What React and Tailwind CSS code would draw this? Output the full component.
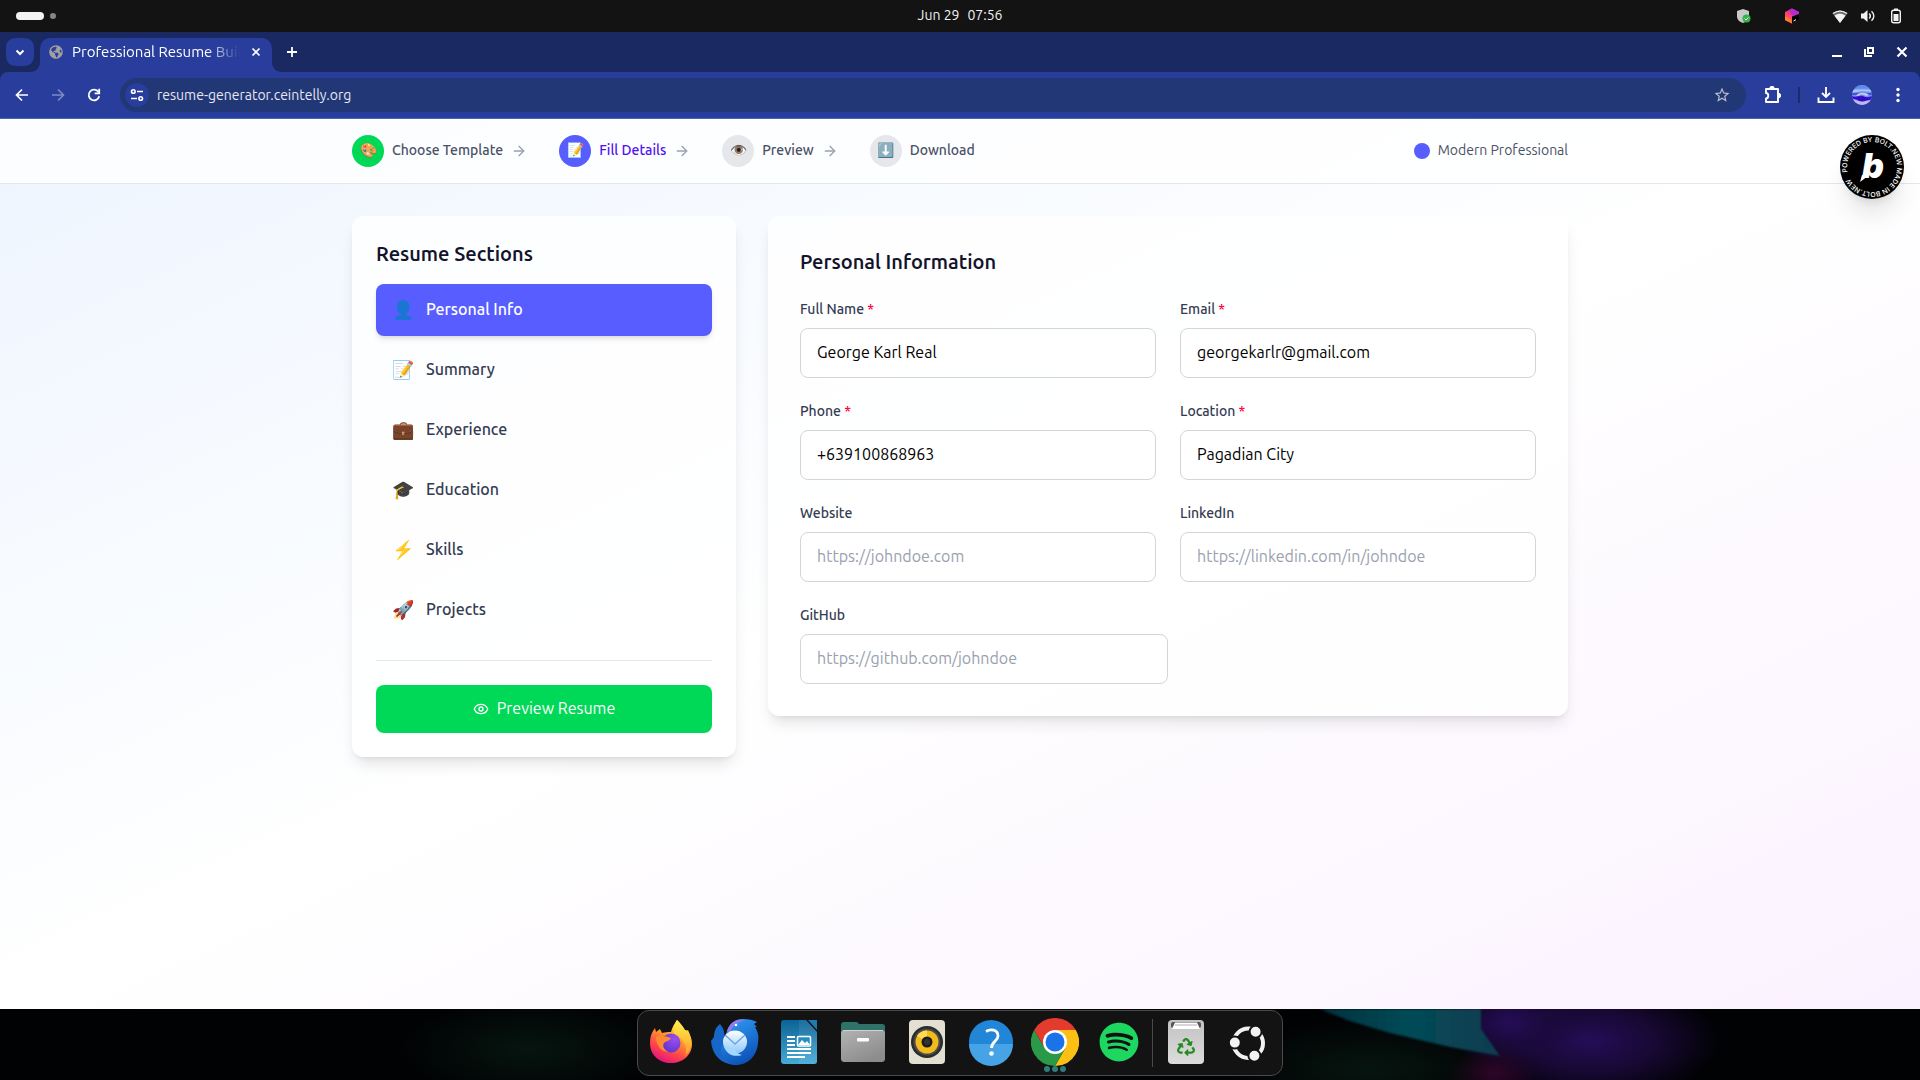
import { useState } from 'react'
import { ArrowRight, Eye } from 'lucide-react'
import { FaGlobeAmericas, FaRecycle, FaSpotify } from 'react-icons/fa'
import { MdStarBorder } from 'react-icons/md'

const STEPS = [
    { icon: '🎨', label: 'Choose Template', state: 'done' },
    { icon: '📝', label: 'Fill Details', state: 'current' },
    { icon: '👁️', label: 'Preview', state: 'todo' },
    { icon: '⬇️', label: 'Download', state: 'todo' },
]

const STEP_CIRCLE = {
    done: 'bg-[#00d957]',
    current: 'bg-[#585dff]',
    todo: 'bg-gray-200',
}

const SECTIONS = [
    { icon: '👤', label: 'Personal Info' },
    { icon: '📝', label: 'Summary' },
    { icon: '💼', label: 'Experience' },
    { icon: '🎓', label: 'Education' },
    { icon: '⚡', label: 'Skills' },
    { icon: '🚀', label: 'Projects' },
]

const FIELDS = [
    { id: 'fullName', label: 'Full Name', type: 'text', required: true, value: 'George Karl Real' },
    { id: 'email', label: 'Email', type: 'email', required: true, value: 'georgekarlr@gmail.com' },
    { id: 'phone', label: 'Phone', type: 'tel', required: true, value: '+639100868963' },
    { id: 'location', label: 'Location', type: 'text', required: true, value: 'Pagadian City' },
    { id: 'website', label: 'Website', type: 'url', placeholder: 'https://johndoe.com' },
    { id: 'linkedin', label: 'LinkedIn', type: 'url', placeholder: 'https://linkedin.com/in/johndoe' },
]

/* ---------- GNOME top bar ---------- */

function TopBar() {
    return (
        <div className="grid h-8 shrink-0 grid-cols-[1fr_auto_1fr] items-center bg-[#131313] px-4 text-[#f2f2f2]">
            <button aria-label="Activities" className="flex items-center gap-1.5">
                <span className="h-2 w-7 rounded-full bg-[#f2f2f2]"></span>
                <span className="h-1.5 w-1.5 rounded-full bg-[#858585]"></span>
            </button>
            <time className="flex gap-2 pb-px text-sm">
                <span>Jun 29</span>
                <span>07:56</span>
            </time>
            <div className="flex items-center justify-end">
                <svg className="mr-8 h-4 w-4" viewBox="0 0 16 16">
                    <path d="M7 1 L13 3 V8 C13 12 10 14 7 15 C4 14 1 12 1 8 V3 Z" fill="#c9c9c9" />
                    <circle cx="10.500" cy="10.500" r="4" fill="#35b34a" />
                    <path d="M8.600 10.600 L10 12 L12.500 9.400" fill="none" stroke="#fff" />
                </svg>
                <svg className="mr-8 h-4 w-4" viewBox="0 0 16 16">
                    <path d="M8 0.500 L15 4 V12 L8 15.500 L1 12 V4 Z" fill="#f7347a" />
                    <path d="M8 0.500 L15 4 V7 L8 7.500 L5 2 Z" fill="#b62bd0" />
                    <path d="M1 4 L8 7.500 V15.500 L1 12 Z" fill="#fb4a6a" />
                    <path d="M1 8 L8 12 V15.500 L1 12 Z" fill="#ff7a2f" />
                    <path d="M8 8.500 L15 6 V12 L8 15.500 Z" fill="#000" />
                    <path d="M9.500 13 L12 11.600" stroke="#fff" />
                </svg>
                <svg className="mr-3 h-4 w-4" viewBox="0 0 16 16">
                    <path d="M8 15 L0.500 5.500 C5 1.500 11 1.500 15.500 5.500 Z" fill="#6b6b6b" />
                    <path d="M8 15 L2.500 7.800 C6 5.200 10 5.200 13.500 7.800 Z" fill="#f2f2f2" />
                    <path d="M1 5.600 C5.200 2.200 10.800 2.200 15 5.600" fill="none" stroke="#f2f2f2" strokeWidth="1.300" />
                </svg>
                <svg className="mr-3 h-4 w-4" viewBox="0 0 16 16" fill="none" stroke="#f2f2f2" strokeWidth="1.400">
                    <path d="M1 5.500 H3.500 L7.500 2 V14 L3.500 10.500 H1 Z" fill="#f2f2f2" stroke="none" />
                    <path d="M9.300 5.500 C10.600 7 10.600 9 9.300 10.500" />
                    <path d="M11.500 3.200 C14.600 5.800 14.600 10.200 11.500 12.800" />
                </svg>
                <svg className="h-4 w-4" viewBox="0 0 16 16">
                    <path d="M6 0.500 H10 V2 H6 Z" fill="#f2f2f2" />
                    <rect x="3.700" y="2.200" width="8.600" height="12.600" rx="2" fill="none" stroke="#f2f2f2" strokeWidth="1.400" />
                    <rect x="5.500" y="6" width="5" height="7" fill="#f2f2f2" />
                </svg>
            </div>
        </div>
    )
}

/* ---------- Browser chrome ---------- */

function TabStrip() {
    return (
        <div className="flex h-10 items-end justify-between bg-[#1a2962] pr-0.5 pl-1.5 font-['Ubuntu','Open_Sans',sans-serif] text-white">
            <div className="flex h-[34px] items-start">
                <button aria-label="Search tabs" className="flex h-7 w-7 items-center justify-center rounded-[9px] bg-[#283d9c]">
                    <svg className="h-3 w-3" viewBox="0 0 12 12" fill="none" stroke="currentColor" strokeWidth="2">
                        <path d="M2.500 4.500 L6 8 L9.500 4.500" />
                    </svg>
                </button>
                <div className="relative ml-1.5 flex h-full w-58 items-center rounded-t-[10px] bg-[#283d9c] pr-2 pb-1.5 pl-[9px]">
                    <svg className="absolute bottom-0 -left-2.5 h-2.5 w-2.5" viewBox="0 0 10 10">
                        <path d="M10 0 V10 H0 C6 10 10 6 10 0 Z" fill="#283d9c" />
                    </svg>
                    <svg className="absolute -right-2.5 bottom-0 h-2.5 w-2.5" viewBox="0 0 10 10">
                        <path d="M0 0 V10 H10 C4 10 0 6 0 0 Z" fill="#283d9c" />
                    </svg>
                    <FaGlobeAmericas className="h-3.5 w-3.5 shrink-0 text-[#9f9f9f]" />
                    <span className="ml-[9px] w-42 overflow-hidden text-[15px] leading-5 whitespace-nowrap [mask-image:linear-gradient(to_right,#000_80%,transparent)]">
                        Professional Resume Builder
                    </span>
                    <button aria-label="Close tab" className="ml-auto flex h-4 w-4 items-center justify-center">
                        <svg className="h-3 w-3" viewBox="0 0 12 12" stroke="currentColor" strokeWidth="1.700">
                            <path d="M2.500 2.500 L9.500 9.500 M9.500 2.500 L2.500 9.500" />
                        </svg>
                    </button>
                </div>
                <button aria-label="New tab" className="ml-1.5 flex h-7 w-7 items-center justify-center">
                    <svg className="h-3 w-3" viewBox="0 0 12 12" stroke="currentColor" strokeWidth="1.800">
                        <path d="M6 1 V11 M1 6 H11" />
                    </svg>
                </button>
            </div>
            <div className="flex h-10 items-center">
                <button aria-label="Minimize" className="flex h-8 w-8 items-center justify-center">
                    <svg className="h-3 w-3" viewBox="0 0 12 12" stroke="currentColor" strokeWidth="2">
                        <path d="M0 10 H10" />
                    </svg>
                </button>
                <button aria-label="Restore" className="flex h-8 w-8 items-center justify-center">
                    <svg className="h-3 w-3" viewBox="0 0 12 12" fill="none" stroke="currentColor" strokeWidth="2">
                        <path d="M4 2 H9 V7 H4 Z M1 3 V10 H8" />
                    </svg>
                </button>
                <button aria-label="Close" className="flex h-8 w-8 items-center justify-center">
                    <svg className="h-3 w-3" viewBox="0 0 12 12" stroke="currentColor" strokeWidth="2.200">
                        <path d="M1.500 1.500 L10.500 10.500 M10.500 1.500 L1.500 10.500" />
                    </svg>
                </button>
            </div>
        </div>
    )
}

function ToolButton({ label, children }) {
    return (
        <button aria-label={label} className="flex h-8 w-9 shrink-0 items-center justify-center">
            {children}
        </button>
    )
}

function Toolbar() {
    return (
        <div className="bg-[#1a2962] font-['Ubuntu','Open_Sans',sans-serif]">
            <div className="flex h-[47px] items-center rounded-t-lg border-b border-[#4767b8] bg-[#283d9c] px-1 text-white">
                <ToolButton label="Back">
                    <svg className="h-4 w-4" viewBox="0 0 16 16" fill="none" stroke="currentColor" strokeWidth="1.700">
                        <path d="M14 8 H3 M8 2.500 L2.500 8 L8 13.500" />
                    </svg>
                </ToolButton>
                <ToolButton label="Forward">
                    <svg className="h-4 w-4 text-[#7d89c4]" viewBox="0 0 16 16" fill="none" stroke="currentColor" strokeWidth="1.700">
                        <path d="M2 8 H13 M8 2.500 L13.500 8 L8 13.500" />
                    </svg>
                </ToolButton>
                <ToolButton label="Reload">
                    <svg className="h-4 w-4" viewBox="0 0 16 16" fill="none" stroke="currentColor" strokeWidth="1.800">
                        <path d="M13.200 9.200 A5.300 5.300 0 1 1 12.400 5" />
                        <path d="M13.200 1.800 V6.300 H8.700" />
                    </svg>
                </ToolButton>
                <div className="mx-2 flex h-[34px] min-w-0 flex-1 items-center rounded-full bg-[#223776] pr-3 pl-[5px]">
                    <button aria-label="Site information" className="flex h-6 w-6 shrink-0 items-center justify-center rounded-full bg-[#283d9c]">
                        <svg className="h-3.5 w-3.5" viewBox="0 0 14 14" fill="none" stroke="currentColor" strokeWidth="1.600">
                            <circle cx="3.300" cy="3.500" r="1.800" />
                            <path d="M7 3.500 H13 M1 10.500 H7" />
                            <circle cx="10.700" cy="10.500" r="1.800" />
                        </svg>
                    </button>
                    <input
                        aria-label="Address"
                        defaultValue="resume-generator.ceintelly.org"
                        className="ml-2 min-w-0 flex-1 bg-transparent text-sm text-[#e6e8f2] outline-none"
                    />
                    <button aria-label="Bookmark" className="flex h-6 w-6 items-center justify-center text-[#b9bcc8]">
                        <MdStarBorder className="h-[18px] w-[18px]" />
                    </button>
                </div>
                <ToolButton label="Extensions">
                    <svg className="h-[18px] w-[18px]" viewBox="0 0 18 18" fill="none" stroke="currentColor" strokeWidth="1.900">
                        <path d="M3 3 H15 V16 H3 V12.500 C6 12.500 6 7 3 7 Z" strokeLinejoin="round" />
                        <path d="M7.200 2.500 A1.700 1.700 0 0 1 10.600 2.500 M15.500 7.800 A1.700 1.700 0 0 1 15.500 11.200" fill="currentColor" />
                    </svg>
                </ToolButton>
                <span className="mx-2 h-4 w-0.5 bg-[#1d2c68]"></span>
                <ToolButton label="Downloads">
                    <svg className="h-[18px] w-[18px]" viewBox="0 0 18 18" fill="none" stroke="currentColor" strokeWidth="1.900">
                        <path d="M9 1 V11 M5 7 L9 11 L13 7 M1.500 11.500 V16 H16.500 V11.500" />
                    </svg>
                </ToolButton>
                <ToolButton label="Profile">
                    <svg className="h-5 w-5" viewBox="0 0 20 20">
                        <defs>
                            <clipPath id="avatar"><circle cx="10" cy="10" r="10" /></clipPath>
                        </defs>
                        <g clipPath="url(#avatar)">
                            <rect width="20" height="20" fill="#6f8ff0" />
                            <path d="M0 0 H20 V3 H0 Z" fill="#5f8ce8" />
                            <path d="M0 4.500 H20 V7 C14 5.500 6 6 0 8 Z" fill="#a9c4f6" />
                            <path d="M0 8 H20 V10 H0 Z" fill="#4a4fd8" />
                            <path d="M4 11 C6 7 14 7 17 10 L14 11 C11 9 8 10 6 11 Z" fill="#c3c9ec" />
                            <path d="M0 11 C4 13 7 10 11 11 C15 13 17 12 20 11 V16 C14 15 6 15 0 14 Z" fill="#3a10d2" />
                            <path d="M1 14 C6 17 14 17 19 14.500 V20 H0 Z" fill="#c6b6ef" />
                            <path d="M3 13 C7 17 11 17 14 15.500 L18 14 L13 12 H7 Z" fill="#2f0cc4" />
                        </g>
                    </svg>
                </ToolButton>
                <ToolButton label="Menu">
                    <svg className="h-4 w-4" viewBox="0 0 16 16" fill="currentColor">
                        <circle cx="8" cy="2.500" r="1.700" />
                        <circle cx="8" cy="8" r="1.700" />
                        <circle cx="8" cy="13.500" r="1.700" />
                    </svg>
                </ToolButton>
            </div>
        </div>
    )
}

/* ---------- Resume generator page ---------- */

function StepHeader() {
    return (
        <header className="border-b border-gray-200 bg-white/80">
            <div className="mx-auto flex max-w-7xl items-center justify-between px-8 py-4">
                <ol className="flex items-center gap-8">
                    {STEPS.map((step, i) => (
                        <li key={step.label} className="flex items-center gap-2">
                            <span className={`flex h-8 w-8 items-center justify-center rounded-full text-sm ${STEP_CIRCLE[step.state]}`}>
                                {step.icon}
                            </span>
                            <span
                                className={`text-sm font-medium ${step.state === 'current' ? 'text-[#5010f2]' : 'text-[#4a5166]'}`}
                            >
                                {step.label}
                            </span>
                            {i < STEPS.length - 1 && <ArrowRight className="h-4 w-4 text-gray-400" />}
                        </li>
                    ))}
                </ol>
                <div className="flex items-center gap-2">
                    <span className="h-4 w-4 rounded-full bg-[#585dff]"></span>
                    <span className="text-sm text-[#4a5166]">Modern Professional</span>
                </div>
            </div>
        </header>
    )
}

function BoltBadge() {
    return (
        <a href="#bolt" aria-label="Powered by Bolt.new" className="absolute top-4 right-4 rounded-full shadow-xl">
            <svg className="h-16 w-16" viewBox="0 0 64 64">
                <defs>
                    <path id="ring" d="M7 32 A25 25 0 0 1 57 32 A25 25 0 0 1 7 32" />
                </defs>
                <circle cx="32" cy="32" r="32" fill="#000" />
                <text fill="#fff" fontSize="6.800" fontWeight="500" fontFamily="Inter, sans-serif" transform="rotate(-12 32 32)">
                    <textPath href="#ring">POWERED BY BOLT.NEW MADE IN BOLT.NEW</textPath>
                </text>
                <text x="33" y="43" textAnchor="middle" fill="#fff" fontSize="34" fontWeight="900" fontStyle="italic" fontFamily="Inter, sans-serif">b</text>
                <path d="M22 40 L20 47 L28 41 Z" fill="#fff" />
            </svg>
        </a>
    )
}

function SectionNav({ active, onSelect }) {
    return (
        <aside className="self-start rounded-xl bg-white/80 p-6 shadow-lg">
            <h2 className="mb-4 text-xl font-semibold text-[#11142b]">Resume Sections</h2>
            <nav className="flex flex-col gap-2">
                {SECTIONS.map(section => (
                    <button
                        key={section.label}
                        onClick={() => onSelect(section.label)}
                        className={`flex w-full items-center gap-3 rounded-lg px-4 py-3 text-left ${
                            section.label === active ? 'bg-[#585dff] text-white shadow-md' : 'text-[#343b52]'
                        }`}
                    >
                        <span className="w-[22px] text-lg leading-7">{section.icon}</span>
                        <span className="font-medium">{section.label}</span>
                    </button>
                ))}
            </nav>
            <div className="mt-6 border-t border-gray-200 pt-6">
                <button className="flex h-12 w-full items-center justify-center gap-2 rounded-lg bg-[#00d957] text-white">
                    <Eye className="h-4 w-4" />
                    <span>Preview Resume</span>
                </button>
            </div>
        </aside>
    )
}

function Field({ id, label, type, required, value, placeholder }) {
    return (
        <div>
            <label htmlFor={id} className="mb-2 block text-sm font-medium text-[#343b52]">
                {label} {required && <span className="text-[#fb0045]">*</span>}
            </label>
            <input
                id={id}
                type={type}
                defaultValue={value}
                placeholder={placeholder}
                className="h-[50px] w-full rounded-lg border border-gray-300 bg-white px-4 pb-0.5 text-black placeholder-gray-400"
            />
        </div>
    )
}

function PersonalInfoForm() {
    return (
        <form className="col-span-2 self-start rounded-xl bg-white/80 p-8 shadow-lg">
            <h2 className="mb-6 text-xl font-semibold text-[#11142b]">Personal Information</h2>
            <div className="grid grid-cols-2 gap-6">
                {FIELDS.map(field => (
                    <Field key={field.id} {...field} />
                ))}
            </div>
            <div className="mt-6 w-1/2">
                <Field id="github" label="GitHub" type="url" placeholder="https://github.com/johndoe" />
            </div>
        </form>
    )
}

function ResumePage() {
    const [active, setActive] = useState('Personal Info')

    return (
        <div className="relative flex-1 bg-linear-to-br from-[#eef5ff] via-white to-[#fbf2ff]">
            <StepHeader />
            <main className="mx-auto grid max-w-7xl grid-cols-3 gap-8 p-8">
                <SectionNav active={active} onSelect={setActive} />
                <PersonalInfoForm />
            </main>
            <BoltBadge />
        </div>
    )
}

/* ---------- Dock ---------- */

function FirefoxIcon() {
    return (
        <svg className="h-12 w-12" viewBox="0 0 48 48">
            <defs>
                <linearGradient id="ffBody" x1="0.8" y1="0" x2="0.3" y2="1">
                    <stop offset="0.1" stopColor="#fff04a" />
                    <stop offset="0.4" stopColor="#ffa02b" />
                    <stop offset="0.7" stopColor="#ff4a48" />
                    <stop offset="1" stopColor="#e3117f" />
                </linearGradient>
                <linearGradient id="ffTail" x1="0" y1="0" x2="0" y2="1">
                    <stop offset="0" stopColor="#fff04a" />
                    <stop offset="1" stopColor="#ff9a2b" />
                </linearGradient>
                <radialGradient id="ffCore" cx="0.7" cy="0.3" r="0.8">
                    <stop offset="0" stopColor="#9b4df5" />
                    <stop offset="1" stopColor="#5b35c9" />
                </radialGradient>
            </defs>
            <path d="M30 2 C33 5 36 8 38 12 C40 12 41 13 41 14 C44 18 45 22 45 26 C45 37 36 45 24 45 C12 45 3 37 3 25 C3 20 4 16 6 13 L8 10 L9 14 L13 11 L15 15 C18 14 21 14 24 14 C25 9 28 5 30 2 Z" fill="url(#ffBody)" />
            <path d="M30 2 C35 7 37 11 38 14 L41 12 C46 22 45 32 38 38 C42 28 35 20 28 16 C25 12 27 7 30 2 Z" fill="url(#ffTail)" />
            <circle cx="24" cy="25" r="9.500" fill="url(#ffCore)" />
            <path d="M9 19 C13 17 19 18 24 20 C23 23 19 23 17 25 C15 28 17 32 22 34 C15 34 9 28 9 19 Z" fill="#ff8a2f" />
        </svg>
    )
}

function ThunderbirdIcon() {
    return (
        <svg className="h-12 w-12" viewBox="0 0 48 48">
            <defs>
                <linearGradient id="tbBody" x1="0.2" y1="0" x2="0.6" y2="1">
                    <stop offset="0" stopColor="#2f9bf4" />
                    <stop offset="1" stopColor="#0b4fb5" />
                </linearGradient>
                <linearGradient id="tbMail" x1="0" y1="0" x2="0" y2="1">
                    <stop offset="0" stopColor="#fff" />
                    <stop offset="1" stopColor="#8cc8fb" />
                </linearGradient>
            </defs>
            <path d="M9 6 C13 11 14 15 13 19 C20 34 30 40 24 47 C10 46 1 37 0 23 L3 19 C3 13 5 9 9 6 Z" fill="#1767c9" />
            <path d="M16 13 C19 5 24 1 32 1 C38 1 42 2 46 4 L43 6 L46 9 L44 9 C47 14 48 18 47 25 C46 38 37 47 25 47 C16 46 11 40 10 32 Z" fill="url(#tbBody)" />
            <path d="M16 13 C19 4 26 0 34 2 C27 4 21 8 19 15 Z" fill="#8d7bf0" />
            <ellipse cx="24" cy="24" rx="12" ry="11.500" fill="url(#tbMail)" />
            <path d="M14 17 L24 26 L34 17" fill="none" stroke="#6fa5e6" strokeWidth="1.500" />
            <path d="M13 29 C17 38 24 39 31 37 C27 36 25 34 24 32 Z" fill="#a5d6ff" />
            <circle cx="25" cy="7" r="1.300" fill="#fff" />
        </svg>
    )
}

function WriterIcon() {
    return (
        <svg className="h-12 w-12" viewBox="0 0 48 48">
            <defs>
                <linearGradient id="writer" x1="0" y1="0" x2="0" y2="1">
                    <stop offset="0" stopColor="#0c6296" />
                    <stop offset="1" stopColor="#45abd8" />
                </linearGradient>
            </defs>
            <path d="M9 2 H31 L42 14 V43 Q42 46 39 46 H9 Q6 46 6 43 V5 Q6 2 9 2 Z" fill="url(#writer)" />
            <path d="M33 2 H42 V12 Z" fill="#1f7baf" />
            <path d="M24 2 H31 L42 14 V46 H24 Z" fill="#fff" opacity="0.080" />
            <path d="M12 19 H20 M12 23 H20 M12 27 H20 M12 31 H36 M12 35 H36 M12 39 H30" stroke="#fff" strokeWidth="2" />
            <rect x="22.500" y="18.500" width="13" height="9.500" rx="1" fill="#238cc2" stroke="#fff" strokeWidth="1.500" />
            <path d="M23 27 L27 22 L30 25 L32 23 L35 27 Z" fill="#fff" />
        </svg>
    )
}

function FilesIcon() {
    return (
        <svg className="h-12 w-12" viewBox="0 0 48 48">
            <defs>
                <linearGradient id="files" x1="0" y1="0" x2="0.6" y2="1">
                    <stop offset="0" stopColor="#b3b3b3" />
                    <stop offset="1" stopColor="#8c8c8c" />
                </linearGradient>
            </defs>
            <path d="M5 4 H17 Q19 4 20 6 H43 Q46 6 46 9 V20 H2 V7 Q2 4 5 4 Z" fill="#2f7269" />
            <rect x="2" y="12" width="44" height="32" rx="3.500" fill="url(#files)" />
            <path d="M4 12.500 H44" stroke="#d2d2d2" />
            <rect x="18" y="20" width="12" height="3.500" rx="1" fill="#fff" />
        </svg>
    )
}

function RhythmboxIcon() {
    return (
        <svg className="h-12 w-12" viewBox="0 0 48 48">
            <rect x="6" y="2" width="36" height="44" rx="4" fill="#e4dfd3" />
            <circle cx="24" cy="24" r="16" fill="#2b2c2e" />
            <circle cx="24" cy="24" r="13.500" fill="#4b4b4b" />
            <circle cx="24" cy="24" r="11.500" fill="#f0bb1b" />
            <path d="M24 24 L14 18 A11.500 11.500 0 0 1 24 12.500 Z" fill="#ffd957" />
            <circle cx="24" cy="24" r="5.500" fill="#1c1c1c" />
            <circle cx="24" cy="24" r="3" fill="#333" />
        </svg>
    )
}

function HelpIcon() {
    return (
        <svg className="h-12 w-12" viewBox="0 0 48 48">
            <circle cx="24" cy="24" r="22" fill="#2186d8" />
            <path d="M2 26 H46 A22 22 0 0 1 2 26 Z" fill="#46a4e6" />
            <path d="M19 13.500 C23 11 31 11 31 18 C31 23 24.500 23.500 24.500 30" fill="none" stroke="#fff" strokeWidth="2.800" />
            <circle cx="24.500" cy="35.500" r="2.300" fill="#fff" />
        </svg>
    )
}

function ChromeIcon() {
    return (
        <svg className="h-12 w-12" viewBox="0 0 48 48">
            <path d="M24 24 L3.200 12 A24 24 0 0 1 44.800 12 Z" fill="#e33b2e" />
            <path d="M24 12 H44.800 A24 24 0 0 1 24 48 L34.400 30 Z" fill="#fcc014" />
            <path d="M34.400 30 L24 48 A24 24 0 0 1 3.200 12 L13.600 30 Z" fill="#2a9a48" />
            <path d="M3.200 12 L13.600 30 L24 12 Z" fill="#e33b2e" />
            <circle cx="24" cy="24" r="12" fill="#fff" />
            <circle cx="24" cy="24" r="9.500" fill="#1a73e8" />
        </svg>
    )
}

function TrashIcon() {
    return (
        <span className="relative flex h-12 w-12 items-center justify-center">
            <svg className="absolute inset-0 h-12 w-12" viewBox="0 0 48 48">
                <defs>
                    <linearGradient id="trash" x1="0" y1="0" x2="0" y2="1">
                        <stop offset="0" stopColor="#c2c2c2" />
                        <stop offset="1" stopColor="#dcdcdc" />
                    </linearGradient>
                </defs>
                <rect x="6" y="2" width="36" height="44" rx="4" fill="url(#trash)" />
                <rect x="9" y="4" width="30" height="6" rx="2" fill="#555" />
                <path d="M13 4.500 H35 L38 11 H10 Z" fill="#fff" />
                <path d="M13 7 H35" stroke="#999" strokeWidth="0.800" />
            </svg>
            <FaRecycle className="relative mt-2.5 h-[18px] w-[18px] text-[#268a20]" />
        </span>
    )
}

function UbuntuIcon() {
    return (
        <svg className="h-12 w-12" viewBox="0 0 48 48">
            <circle cx="24.300" cy="25.300" r="14.700" fill="none" stroke="#f2f2f2" strokeWidth="4" />
            <g fill="#f2f2f2" stroke="#131313" strokeWidth="2">
                <circle cx="10.800" cy="24.600" r="6" />
                <circle cx="31.600" cy="13.800" r="6" />
                <circle cx="30.400" cy="37.700" r="6" />
            </g>
        </svg>
    )
}

function DockItem({ label, width = 'w-16', children }) {
    return (
        <button aria-label={label} className={`relative flex h-[62px] items-center justify-center ${width}`}>
            {children}
        </button>
    )
}

function Desktop() {
    return (
        <div className="relative flex h-[71px] shrink-0 items-start justify-center overflow-hidden bg-[#010204]">
            <svg className="absolute inset-0 h-full w-full" viewBox="0 0 1920 71" preserveAspectRatio="none">
                <defs>
                    <radialGradient id="greenGlow">
                        <stop offset="0" stopColor="#06150f" />
                        <stop offset="1" stopColor="#06150f" stopOpacity="0" />
                    </radialGradient>
                    <radialGradient id="purpleGlow">
                        <stop offset="0" stopColor="#260d59" />
                        <stop offset="0.500" stopColor="#1d0a40" stopOpacity="0.800" />
                        <stop offset="1" stopColor="#1d0a40" stopOpacity="0" />
                    </radialGradient>
                    <radialGradient id="magentaGlow">
                        <stop offset="0" stopColor="#2f0529" />
                        <stop offset="1" stopColor="#2f0529" stopOpacity="0" />
                    </radialGradient>
                    <linearGradient id="teal" x1="0" y1="0" x2="1" y2="0">
                        <stop offset="0" stopColor="#04323c" />
                        <stop offset="0.500" stopColor="#054a57" />
                        <stop offset="1" stopColor="#0b3c50" />
                    </linearGradient>
                    <filter id="edge"><feGaussianBlur stdDeviation="1" /></filter>
                </defs>
                <ellipse cx="530" cy="40" rx="130" ry="50" fill="url(#greenGlow)" />
                <ellipse cx="1370" cy="60" rx="150" ry="50" fill="url(#greenGlow)" />
                <ellipse cx="1590" cy="32" rx="130" ry="60" fill="url(#purpleGlow)" />
                <ellipse cx="1510" cy="14" rx="70" ry="40" fill="url(#purpleGlow)" />
                <ellipse cx="1494" cy="64" rx="44" ry="26" fill="url(#magentaGlow)" />
                <path d="M1320 0 H1481 V20 L1500 47 L1450 38 L1390 24 L1350 12 Z" fill="url(#teal)" filter="url(#edge)" />
            </svg>
            <div className="relative mt-px flex h-[66px] items-start rounded-xl border border-[#4a4a4a] bg-[#131313] pr-1 pl-px">
                <DockItem label="Firefox"><FirefoxIcon /></DockItem>
                <DockItem label="Thunderbird"><ThunderbirdIcon /></DockItem>
                <DockItem label="LibreOffice Writer"><WriterIcon /></DockItem>
                <DockItem label="Files"><FilesIcon /></DockItem>
                <DockItem label="Rhythmbox"><RhythmboxIcon /></DockItem>
                <DockItem label="Help"><HelpIcon /></DockItem>
                <DockItem label="Google Chrome">
                    <ChromeIcon />
                    <span className="absolute bottom-px flex gap-0.5">
                        <span className="h-1.5 w-1.5 rounded-full bg-[#2f7d7a]"></span>
                        <span className="h-1.5 w-1.5 rounded-full bg-[#2f7d7a]"></span>
                        <span className="h-1.5 w-1.5 rounded-full bg-[#2f7d7a]"></span>
                    </span>
                </DockItem>
                <DockItem label="Spotify"><FaSpotify className="h-10 w-10 text-[#1ed760]" /></DockItem>
                <span className="mx-px mt-2 h-12 w-px bg-[#4a4a4a]"></span>
                <DockItem label="Trash"><TrashIcon /></DockItem>
                <DockItem label="Show Applications" width="w-[60px]"><UbuntuIcon /></DockItem>
            </div>
        </div>
    )
}

export default function App() {
    return (
        <div className="flex min-h-screen flex-col font-['Ubuntu_Sans','Ubuntu','Open_Sans','Noto_Sans',sans-serif]">
            <TopBar />
            <TabStrip />
            <Toolbar />
            <ResumePage />
            <Desktop />
        </div>
    )
}
